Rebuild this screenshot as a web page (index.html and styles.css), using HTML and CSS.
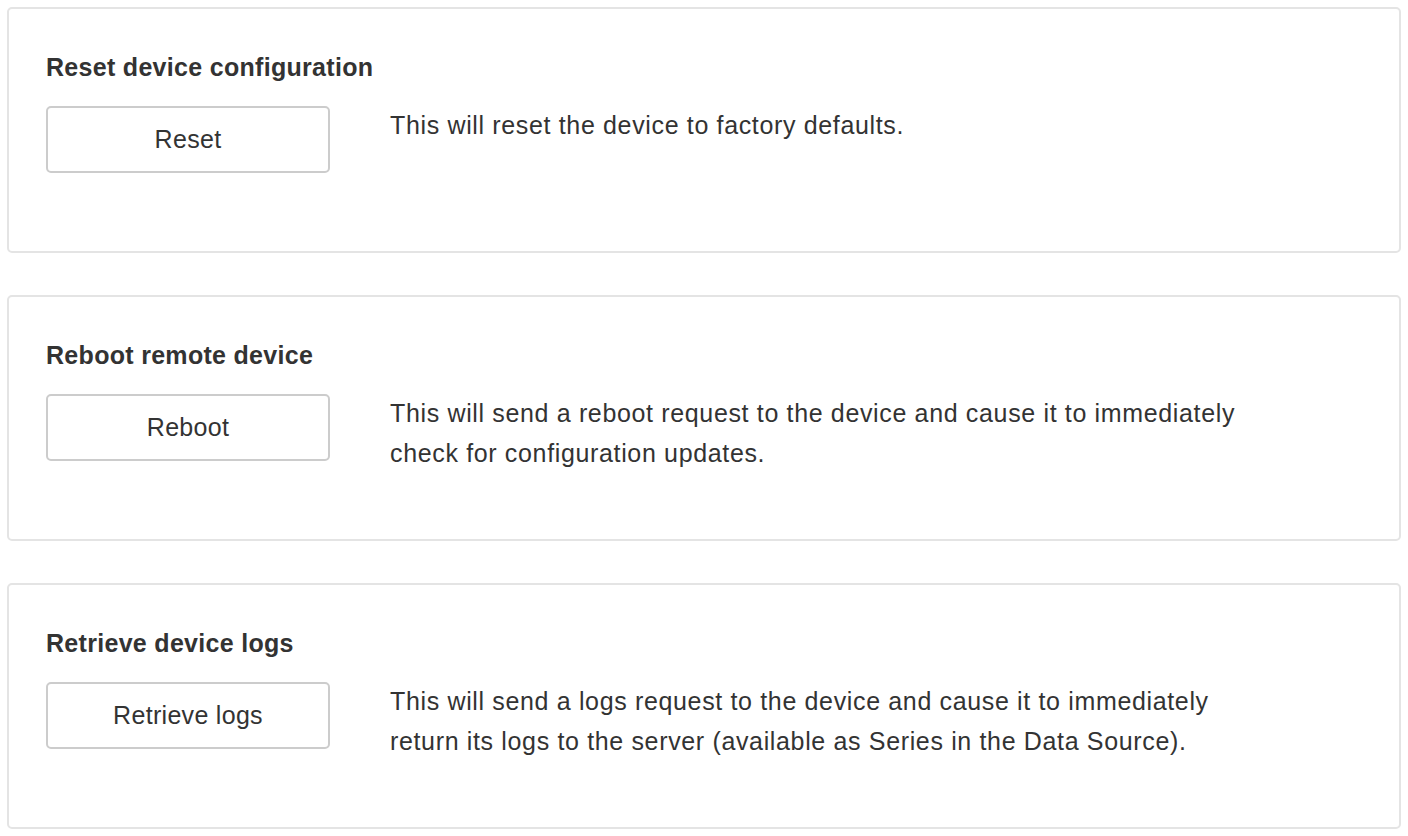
FILE: index.html
```html
<!DOCTYPE html>
<html>
<head>
<meta charset="utf-8">
<link rel="stylesheet" href="styles.css">
</head>
<body>
<div class="page">
  <section class="panel">
    <h3 class="title">Reset device configuration</h3>
    <div class="row">
      <button class="btn">Reset</button>
      <p class="desc">This will reset the device to factory defaults.</p>
    </div>
  </section>
  <section class="panel">
    <h3 class="title">Reboot remote device</h3>
    <div class="row">
      <button class="btn">Reboot</button>
      <p class="desc">This will send a reboot request to the device and cause it to immediately<br>check for configuration updates.</p>
    </div>
  </section>
  <section class="panel">
    <h3 class="title">Retrieve device logs</h3>
    <div class="row">
      <button class="btn">Retrieve logs</button>
      <p class="desc">This will send a logs request to the device and cause it to immediately<br>return its logs to the server (available as Series in the Data Source).</p>
    </div>
  </section>
</div>
</body>
</html>
```

FILE: styles.css
```css
html, body {
  margin: 0;
  padding: 0;
  background: #fff;
}
body {
  font-family: "Liberation Sans", Arial, sans-serif;
  color: #333;
}
.page {
  padding: 7px 7px 0 7px;
  display: flex;
  flex-direction: column;
  gap: 42px;
}
.panel {
  box-sizing: border-box;
  height: 246px;
  border: 2px solid #e4e4e4;
  border-radius: 5px;
  background: #fff;
  padding: 43px 37px 0 37px;
}
.title {
  margin: 0 0 24px 0;
  font-size: 25px;
  line-height: 30px;
  font-weight: bold;
  letter-spacing: 0.3px;
  color: #333;
}
.row {
  display: flex;
  align-items: flex-start;
  gap: 60px;
}
.btn {
  box-sizing: border-box;
  width: 284px;
  height: 67px;
  flex: none;
  background: #fff;
  border: 2px solid #ccc;
  border-radius: 5px;
  font-family: "Liberation Sans", Arial, sans-serif;
  font-size: 25px;
  letter-spacing: 0.3px;
  color: #333;
  padding: 0;
}
.desc {
  margin: -1px 0 0 0;
  font-size: 25px;
  line-height: 40px;
  letter-spacing: 0.65px;
  color: #333;
}
```
